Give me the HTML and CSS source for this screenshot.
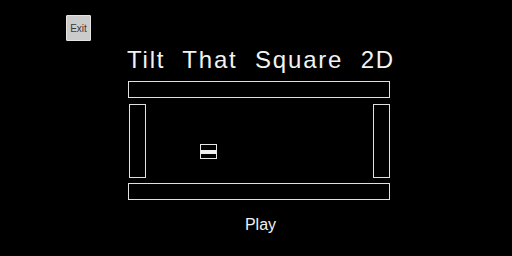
FILE: index.html
```html
<!DOCTYPE html>
<html>
<head>
<meta charset="utf-8">
<link rel="stylesheet" href="styles.css">
</head>
<body>
<div class="screen">
  <button class="exit">Exit</button>
  <div class="main">
    <h1 class="title">Tilt That Square 2D</h1>
    <div class="bar"></div>
    <div class="middle">
      <div class="wall"></div>
      <div class="square"><div class="band"></div></div>
      <div class="wall"></div>
    </div>
    <div class="bar bar-bottom"></div>
    <div class="play">Play</div>
  </div>
</div>
</body>
</html>
```
FILE: styles.css
```css
html, body {
  margin: 0;
  padding: 0;
  background: #000;
}
.screen {
  width: 512px;
  height: 256px;
  background: #000;
  overflow: hidden;
  font-family: "Liberation Sans", Arial, sans-serif;
}
.exit {
  display: block;
  margin: 15px 0 0 66px;
  width: 25px;
  height: 26px;
  padding: 2px 0 0 0;
  border: 1px solid #e4e4e4;
  border-radius: 1px;
  background: #cbcbcb;
  color: #3a3a3a;
  font-family: "Liberation Sans", Arial, sans-serif;
  font-size: 10px;
  line-height: 22px;
  text-align: center;
}
.main {
  width: 262px;
  margin-left: 128px;
  display: flex;
  flex-direction: column;
}
.title {
  margin: 5px -12px 0 -8px;
  color: #f2f2f2;
  font-size: 24px;
  font-weight: normal;
  line-height: 28px;
  letter-spacing: 1.8px;
  word-spacing: 9px;
  text-align: center;
  white-space: nowrap;
}
.bar {
  margin-top: 7px;
  height: 15px;
  border: 1px solid #e0e0e0;
}
.middle {
  position: relative;
  margin-top: 6px;
  height: 74px;
  display: flex;
  justify-content: space-between;
}
.wall {
  width: 15px;
  height: 72px;
  border: 1px solid #e0e0e0;
}
.middle .wall:first-child {
  margin-left: 1px;
}
.square {
  position: absolute;
  left: 72px;
  top: 40px;
  width: 15px;
  height: 13px;
  border: 1px solid #e8e8e8;
  display: flex;
  align-items: center;
}
.band {
  width: 100%;
  height: 4px;
  background: #f0f0f0;
}
.bar-bottom {
  margin-top: 5px;
}
.play {
  margin-top: 16px;
  padding-left: 3px;
  color: #f2f2f2;
  font-size: 16px;
  line-height: 18px;
  text-align: center;
}
```
